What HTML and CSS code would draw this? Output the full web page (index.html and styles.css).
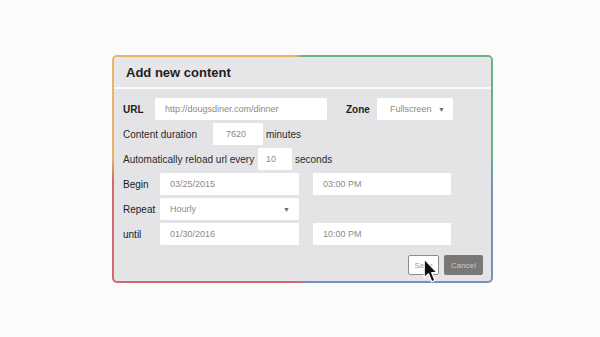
FILE: index.html
```html
<!DOCTYPE html>
<html>
<head>
<meta charset="utf-8">
<link rel="stylesheet" href="styles.css">
</head>
<body>
<div class="stage">
  <div class="frame">
    <div class="dialog">
      <div class="header">Add new content</div>
      <div class="body">
        <div class="row">
          <span class="lbl bold w-url">URL</span>
          <span class="input w-172">http://dougsdiner.com/dinner</span>
          <span class="lbl bold w-zone">Zone</span>
          <span class="input select w-76">Fullscreen<span class="caret">&#9660;</span></span>
        </div>
        <div class="row">
          <span class="lbl w-dur">Content duration</span>
          <span class="input center w-50">7620</span>
          <span class="after">minutes</span>
        </div>
        <div class="row">
          <span class="lbl w-auto">Automatically reload url every</span>
          <span class="input w-34">10</span>
          <span class="after">seconds</span>
        </div>
        <div class="row">
          <span class="lbl dark w-sched">Begin</span>
          <span class="input w-139">03/25/2015</span>
          <span class="input w-138 second">03:00 PM</span>
        </div>
        <div class="row">
          <span class="lbl dark w-sched">Repeat</span>
          <span class="input select w-139">Hourly<span class="caret">&#9660;</span></span>
        </div>
        <div class="row">
          <span class="lbl dark w-sched">until</span>
          <span class="input w-139">01/30/2016</span>
          <span class="input w-138 second">10:00 PM</span>
        </div>
        <div class="actions">
          <span class="btn save">Save</span>
          <span class="btn cancel">Cancel</span>
        </div>
      </div>
    </div>
  </div>
</div>
<svg class="cursor" width="16" height="26" viewBox="0 0 14 23">
  <path d="M1 1 L1 17.5 L4.8 14 L7.6 21 L10.4 19.8 L7.7 13 L12.6 13 Z" fill="#111" stroke="#fff" stroke-width="1.1" stroke-linejoin="round"/>
</svg>
</body>
</html>
```
FILE: styles.css
```css
html, body {
  margin: 0;
  padding: 0;
}
body {
  background: #fbfbfb;
  font-family: "Liberation Sans", Arial, sans-serif;
  width: 600px;
  height: 337px;
  overflow: hidden;
  position: relative;
}
.stage {
  padding: 55px 0 0 112px;
}
.frame {
  width: 381px;
  height: 228px;
  box-sizing: border-box;
  padding: 2px;
  border-radius: 5px;
  background: conic-gradient(#63b586 0 24%, #7591bc 26% 49%, #d4676c 51% 74%, #e8b46b 76% 99%, #63b586 100%);
}
.dialog {
  height: 100%;
  background: #e4e4e6;
  border-radius: 3px;
  overflow: hidden;
  display: flex;
  flex-direction: column;
}
.header {
  height: 30px;
  flex: none;
  display: flex;
  align-items: center;
  padding-left: 12px;
  font-weight: bold;
  font-size: 13px;
  color: #1e1e1e;
  background: #e6e6e8;
  border-bottom: 2px solid #fbfbfb;
}
.body {
  padding: 9px 8px 0 9px;
  display: flex;
  flex-direction: column;
  gap: 3px;
}
.row {
  display: flex;
  align-items: center;
  height: 22px;
  font-size: 10px;
  color: #2a2a2a;
}
.lbl {
  flex: none;
  white-space: nowrap;
}
.bold {
  font-weight: bold;
  color: #1e1e1e;
}
.dark {
  color: #1a1a1a;
}
.w-url { width: 32px; }
.w-zone { width: 31px; margin-left: 19px; }
.w-dur { width: 90px; }
.w-auto { width: 135px; }
.w-sched { width: 37px; }
.input {
  flex: none;
  height: 22px;
  box-sizing: border-box;
  background: #fff;
  border-radius: 1px;
  padding-left: 10px;
  display: flex;
  align-items: center;
  font-size: 9px;
  color: #8a8a8a;
  white-space: nowrap;
}
.center {
  justify-content: center;
  padding-left: 0;
  padding-right: 4px;
}
.w-172 { width: 172px; }
.w-76 { width: 76px; padding-left: 13px; }
.w-50 { width: 50px; }
.w-34 { width: 34px; padding-left: 8px; }
.w-139 { width: 139px; }
.w-138 { width: 138px; }
.second { margin-left: 14px; }
.select {
  justify-content: space-between;
  padding-right: 8px;
}
.w-139.select { padding-right: 9px; }
.caret {
  font-size: 7px;
  color: #707070;
}
.after {
  margin-left: 3px;
}
.actions {
  display: flex;
  justify-content: flex-end;
  gap: 5px;
  margin-top: 7px;
}
.btn {
  height: 20px;
  box-sizing: border-box;
  border-radius: 2px;
  display: flex;
  align-items: center;
  justify-content: center;
  font-size: 8px;
}
.save {
  width: 31px;
  background: #fff;
  border: 1px solid #8c8c8c;
  color: #9a9a9a;
}
.cancel {
  width: 39px;
  background: #787878;
  color: #c8c8c8;
}
.cursor {
  position: absolute;
  left: 423px;
  top: 258px;
}
```
